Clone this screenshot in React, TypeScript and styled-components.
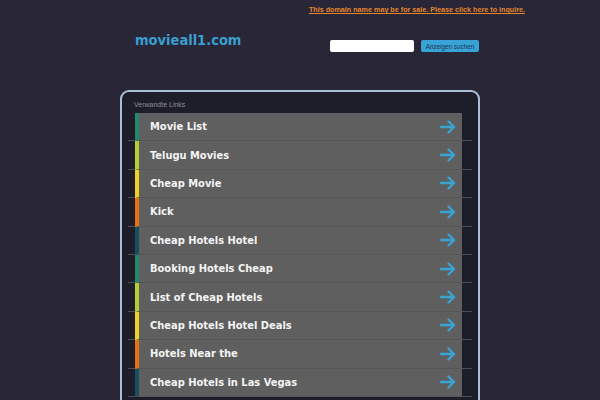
import React from "react";
import styled, { createGlobalStyle } from "styled-components";

const Global = createGlobalStyle`
  html, body { margin: 0; padding: 0; background: #282637; }
  body { font-family: "DejaVu Sans", "Liberation Sans", sans-serif; height: 400px; overflow: hidden; }
`;

const TopBar = styled.div`
  display: flex;
  justify-content: flex-end;
  padding: 5px 75px 0 0;
  height: 14px;
`;

const SaleLink = styled.a`
  font-family: "Liberation Sans", Arial, sans-serif;
  font-size: 7.2px;
  font-weight: bold;
  color: #e5852c;
  text-decoration: underline;
`;

const Container = styled.div`
  width: 360px;
  margin: 0 auto;
`;

const Header = styled.div`
  display: flex;
  align-items: flex-start;
  justify-content: space-between;
  height: 71px;
  padding: 13px 1px 0 15px;
  box-sizing: border-box;
`;

const Logo = styled.div`
  font-family: "DejaVu Sans Condensed", "DejaVu Sans", sans-serif;
  font-stretch: condensed;
  font-weight: bold;
  font-size: 14.5px;
  color: #3a9fd0;
`;

const Search = styled.form`
  display: flex;
  gap: 7px;
  margin-top: 8px;
`;

const Input = styled.div`
  width: 84px;
  height: 12px;
  background: #fff;
  border-radius: 2px;
`;

const Button = styled.div`
  width: 58px;
  height: 12px;
  background: #37a3d6;
  border-radius: 2px;
  font-family: "Liberation Sans", Arial, sans-serif;
  font-size: 6.3px;
  color: #1e3550;
  display: flex;
  align-items: center;
  justify-content: center;
`;

const Panel = styled.div`
  border: 2px solid #a9bfd3;
  border-bottom: none;
  border-radius: 9px 9px 0 0;
  background: #1e1d2a;
  height: 320px;
  box-sizing: border-box;
  padding: 9px 0 0 13px;
`;

const Label = styled.div`
  font-family: "Liberation Sans", Arial, sans-serif;
  font-size: 7px;
  color: #8e8e9a;
  height: 12px;
  margin-left: -1px;
`;

const List = styled.div`
  display: flex;
  flex-direction: column;
  width: 327px;
`;

const Row = styled.div<{ $bar: string }>`
  position: relative;
  height: 28.4px;
  box-sizing: border-box;
  display: flex;
  align-items: center;
  background: #5f5f5f;
  border-left: 4px solid ${(p) => p.$bar};
  border-bottom: 1px solid #565656;
  padding-left: 11px;
  color: #f4f4f4;
  font-family: "DejaVu Sans Condensed", "DejaVu Sans", sans-serif;
  font-stretch: condensed;
  font-weight: bold;
  font-size: 11px;
  &::before, &::after {
    content: "";
    position: absolute;
    bottom: -1px;
    height: 1px;
    background: #4c4c55;
  }
  &::before { left: -11px; width: 7px; }
  &::after { right: -10px; width: 10px; }
`;

const Text = styled.span`
  flex: 1;
`;

const Arrow = styled.svg`
  width: 16px;
  height: 14px;
  margin-right: 6px;
`;

const items: [string, string][] = [
  ["Movie List", "#23896e"],
  ["Telugu Movies", "#b5cc32"],
  ["Cheap Movie", "#f0d322"],
  ["Kick", "#e4720f"],
  ["Cheap Hotels Hotel", "#164f62"],
  ["Booking Hotels Cheap", "#23896e"],
  ["List of Cheap Hotels", "#b5cc32"],
  ["Cheap Hotels Hotel Deals", "#f0d322"],
  ["Hotels Near the", "#e4720f"],
  ["Cheap Hotels in Las Vegas", "#164f62"],
];

export default function App() {
  return (
    <>
      <Global />
      <TopBar>
        <SaleLink>This domain name may be for sale. Please click here to inquire.</SaleLink>
      </TopBar>
      <Container>
        <Header>
          <Logo>movieall1.com</Logo>
          <Search>
            <Input />
            <Button>Anzeigen suchen</Button>
          </Search>
        </Header>
        <Panel>
          <Label>Verwandte Links</Label>
          <List>
            {items.map(([t, c]) => (
              <Row key={t} $bar={c}>
                <Text>{t}</Text>
                <Arrow viewBox="0 0 16 14">
                  <path d="M1 7 H14 M8.5 1.5 L14 7 L8.5 12.5" fill="none" stroke="#3aa3d6" strokeWidth="2.4" strokeLinecap="round" strokeLinejoin="round" />
                </Arrow>
              </Row>
            ))}
          </List>
        </Panel>
      </Container>
    </>
  );
}
